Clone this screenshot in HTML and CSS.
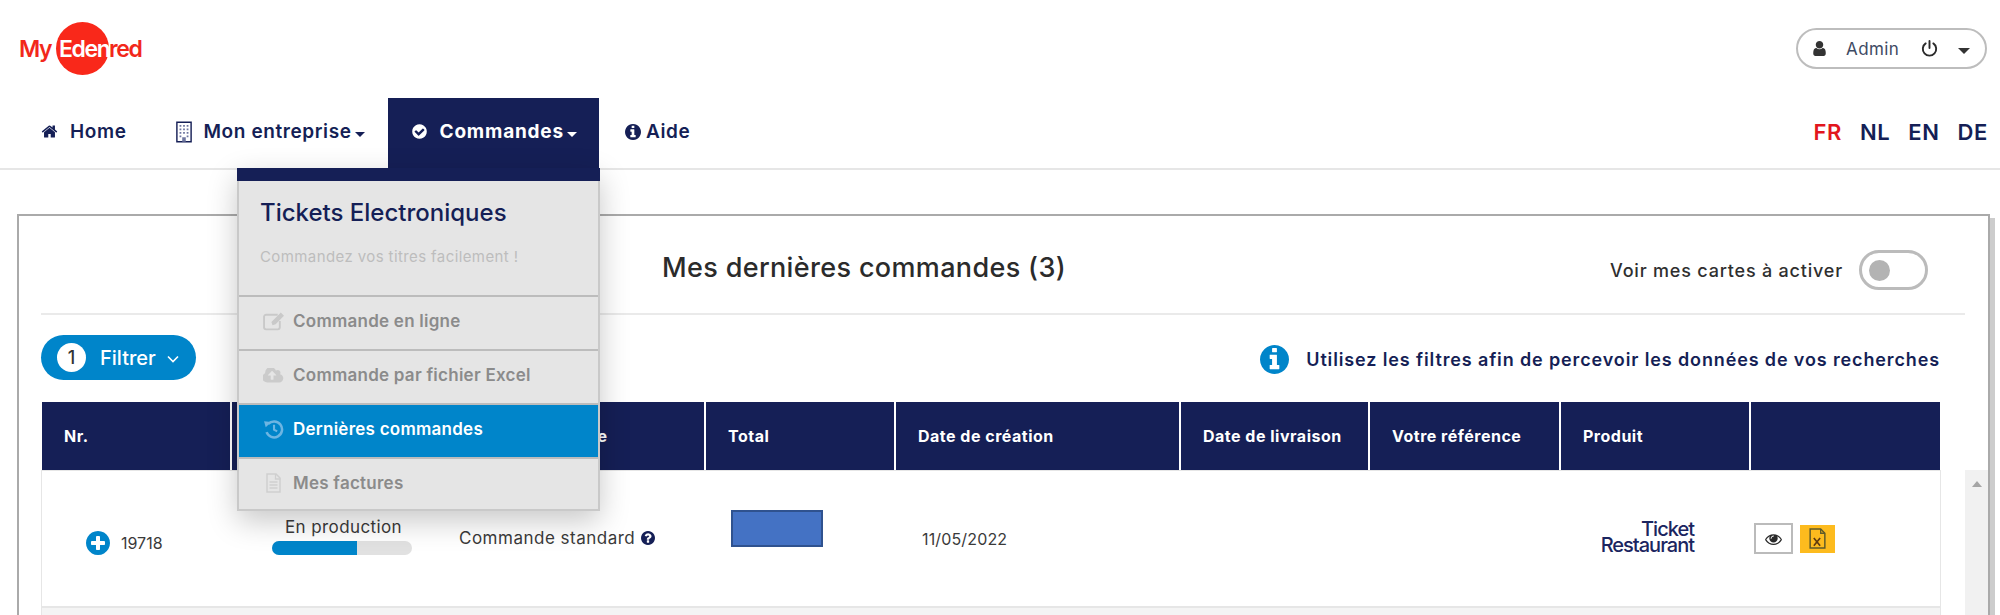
FILE: index.html
```html
<!DOCTYPE html>
<html lang="fr">
<head>
<meta charset="utf-8">
<title>MyEdenred</title>
<link rel="stylesheet" href="styles.css">
</head>
<body>
<svg class="defs" aria-hidden="true">
  <symbol id="i-home" viewBox="0 0 1792 1792"><path d="M1472 992v480q0 26-19 45t-45 19h-384v-384h-256v384h-384q-26 0-45-19t-19-45v-480q0-1 .5-3t.5-3l575-474 575 474q1 2 1 6zm223-69l-62 74q-8 9-21 11h-3q-13 0-21-7l-692-577-692 577q-12 8-24 7-13-2-21-11l-62-74q-8-10-7-23.5t11-21.5l719-599q32-26 76-26t76 26l244 204v-195q0-14 9-23t23-9h192q14 0 23 9t9 23v408l219 182q10 8 11 21.5t-7 23.5z"/></symbol>
  <symbol id="i-check" viewBox="0 0 1792 1792"><path d="M1412 734q0-28-18-46l-91-90q-19-19-45-19t-45 19l-408 407-226-226q-19-19-45-19t-45 19l-91 90q-18 18-18 46 0 27 18 45l362 362q19 19 45 19 27 0 46-19l543-543q18-18 18-45zm252 162q0 209-103 385.5t-279.5 279.5-385.5 103-385.5-103-279.5-279.5-103-385.5 103-385.5 279.5-279.5 385.5-103 385.5 103 279.5 279.5 103 385.5z"/></symbol>
  <symbol id="i-info" viewBox="128 128 1536 1536"><path d="M1152 1376v-160q0-14-9-23t-23-9h-96v-512q0-14-9-23t-23-9h-320q-14 0-23 9t-9 23v160q0 14 9 23t23 9h96v320h-96q-14 0-23 9t-9 23v160q0 14 9 23t23 9h448q14 0 23-9t9-23zm-128-896v-160q0-14-9-23t-23-9h-192q-14 0-23 9t-9 23v160q0 14 9 23t23 9h192q14 0 23-9t9-23zm640 416q0 209-103 385.5t-279.5 279.5-385.5 103-385.5-103-279.5-279.5-103-385.5 103-385.5 279.5-279.5 385.5-103 385.5 103 279.5 279.5 103 385.5z"/></symbol>
  <symbol id="i-plus" viewBox="128 128 1536 1536"><path d="M1344 960v-128q0-26-19-45t-45-19h-256v-256q0-26-19-45t-45-19h-128q-26 0-45 19t-19 45v256h-256q-26 0-45 19t-19 45v128q0 26 19 45t45 19h256v256q0 26 19 45t45 19h128q26 0 45-19t19-45v-256h256q26 0 45-19t19-45zm320-64q0 209-103 385.5t-279.5 279.5-385.5 103-385.5-103-279.5-279.5-103-385.5 103-385.5 279.5-279.5 385.5-103 385.5 103 279.5 279.5 103 385.5z"/></symbol>
  <symbol id="i-question" viewBox="128 128 1536 1536"><path d="M1024 1376v-192q0-14-9-23t-23-9h-192q-14 0-23 9t-9 23v192q0 14 9 23t23 9h192q14 0 23-9t9-23zm256-672q0-88-55.5-163t-138.5-116-170-41q-243 0-371 213-15 24 8 42l132 100q7 6 19 6 16 0 25-12 53-68 86-92 34-24 86-24 48 0 85.5 26t37.5 59q0 38-20 61t-68 45q-63 28-115.5 86.5t-52.5 125.5v36q0 14 9 23t23 9h192q14 0 23-9t9-23q0-19 21.5-49.5t54.5-49.5q32-18 49-28.5t46-35 44.5-48 28-60.5 12.5-81zm384 192q0 209-103 385.5t-279.5 279.5-385.5 103-385.5-103-279.5-279.5-103-385.5 103-385.5 279.5-279.5 385.5-103 385.5 103 279.5 279.5 103 385.5z"/></symbol>
  <symbol id="i-user" viewBox="256 128 1280 1536"><path d="M1536 1399q0 109-62.5 187t-150.5 78h-854q-88 0-150.5-78t-62.5-187q0-85 8.5-160.5t31.5-152 58.5-131 94-89 134.5-34.5q131 128 313 128t313-128q76 0 134.5 34.5t94 89 58.5 131 31.5 152 8.5 160.5zm-256-887q0 159-112.5 271.5t-271.5 112.5-271.5-112.5-112.5-271.5 112.5-271.5 271.5-112.5 271.5 112.5 112.5 271.5z"/></symbol>
  <symbol id="i-eye" viewBox="0 256 1792 1280"><path d="M1664 960q-152-236-381-353 61 104 61 225 0 185-131.5 316.5t-316.5 131.5-316.5-131.5-131.5-316.5q0-121 61-225-229 117-381 353 133 205 333.5 326.5t434.5 121.5 434.5-121.5 333.5-326.5zm-720-384q0-20-14-34t-34-14q-125 0-214.5 89.5t-89.5 214.5q0 20 14 34t34 14 34-14 14-34q0-86 61-147t147-61q20 0 34-14t14-34zm848 384q0 34-20 69-140 230-376.5 368.5t-499.5 138.5-499.5-139-376.5-368q-20-35-20-69t20-69q140-229 376.5-368t499.5-139 499.5 139 376.5 368q20 35 20 69z"/></symbol>
  <symbol id="i-cloud" viewBox="0 256 1920 1280"><path d="M1216 864q0-14-9-23l-352-352q-9-9-23-9t-23 9l-351 351q-10 12-10 24 0 14 9 23t23 9h224v352q0 13 9.5 22.5t22.5 9.5h192q13 0 22.5-9.5t9.5-22.5v-352h224q13 0 22.5-9.5t9.5-22.5zm640 288q0 159-112.5 271.5t-271.5 112.5h-1088q-185 0-316.5-131.5t-131.5-316.5q0-130 70-240t188-165q-2-30-2-43 0-212 150-362t362-150q156 0 285.5 87t188.5 231q71-62 166-62 106 0 181 75t75 181q0 76-41 138 130 31 213.5 135.5t83.5 238.5z"/></symbol>
</svg>

<header class="top">
  <div class="logo">
    <span class="logo-disc"></span>
    <span class="logo-my">My</span><span class="logo-name">Eden</span><span class="logo-end">red</span>
  </div>
  <div class="user-pill">
    <svg class="pill-user"><use href="#i-user"/></svg>
    <span class="pill-name">Admin</span>
    <svg class="pill-power" viewBox="0 0 16 16"><path d="M8 1v6.5M4.4 3.2a6.3 6.3 0 1 0 7.2 0" fill="none" stroke="#2b2b2b" stroke-width="1.8" stroke-linecap="round"/></svg>
    <span class="caret pill-caret"></span>
  </div>
</header>

<nav class="nav">
  <a class="nav-item nav-item-home"><svg class="nav-ico"><use href="#i-home"/></svg><span>Home</span></a>
  <a class="nav-item nav-item-org">
    <svg class="nav-ico" viewBox="0 0 18 24"><path d="M1 1h16v22H1z" fill="#fff" stroke="#151f56" stroke-width="1.6"/><path d="M4 4h2v2H4zm4 0h2v2H8zm4 0h2v2h-2zM4 8h2v2H4zm4 0h2v2H8zm4 0h2v2h-2zM4 12h2v2H4zm4 0h2v2H8zm4 0h2v2h-2zM4 16h2v2H4zm8 0h2v2h-2zM7 18h4v5H7z" fill="#6f77a0"/></svg>
    <span>Mon entreprise</span><span class="caret nav-caret"></span>
  </a>
  <a class="nav-item nav-item-active"><svg class="nav-ico"><use href="#i-check"/></svg><span>Commandes</span><span class="caret nav-caret"></span></a>
  <a class="nav-item nav-item-help"><svg class="help-ico"><use href="#i-info"/></svg><span>Aide</span></a>
  <div class="langs">
    <a class="lang lang-on">FR</a><a class="lang">NL</a><a class="lang">EN</a><a class="lang">DE</a>
  </div>

  <div class="menu">
    <div class="menu-band"></div>
    <div class="menu-head">
      <div class="menu-title">Tickets Electroniques</div>
      <div class="menu-sub">Commandez vos titres facilement !</div>
    </div>
    <a class="menu-item">
      <svg class="menu-ico" viewBox="0 0 20 18"><path d="M14 3H3a2 2 0 0 0-2 2v10a2 2 0 0 0 2 2h11a2 2 0 0 0 2-2V9" fill="none" stroke="#c9c9c9" stroke-width="1.8"/><path d="M8 10l1 3 3-1 8-8-3-3z" fill="#c9c9c9"/></svg>
      <span>Commande en ligne</span>
    </a>
    <a class="menu-item"><svg class="menu-ico menu-ico-fill"><use href="#i-cloud"/></svg><span>Commande par fichier Excel</span></a>
    <a class="menu-item menu-item-on">
      <svg class="menu-ico" viewBox="0 0 20 18"><path d="M5 4.2A7.6 7.6 0 1 1 3.4 12" fill="none" stroke="#6db5e2" stroke-width="2.4"/><path d="M1 1.5l7 .8-5.4 5z" fill="#6db5e2"/><path d="M10.5 5v4.6l3 1.6" fill="none" stroke="#6db5e2" stroke-width="2"/></svg>
      <span>Dernières commandes</span>
    </a>
    <a class="menu-item">
      <svg class="menu-ico" viewBox="0 0 20 20"><path d="M3.5 1h9l4 4v14h-13z" fill="none" stroke="#cfcfcf" stroke-width="1.5"/><path d="M12 1v5h5M6 9h8M6 12h8M6 15h8" fill="none" stroke="#cfcfcf" stroke-width="1.3"/></svg>
      <span>Mes factures</span>
    </a>
  </div>
</nav>

<main class="page">
  <section class="panel">
    <div class="title-row">
      <h1 class="title">Mes dernières commandes (3)</h1>
      <div class="toggle-wrap">
        <span class="toggle-label">Voir mes cartes à activer</span>
        <span class="toggle"><span class="toggle-knob"></span></span>
      </div>
    </div>
    <div class="toolbar">
      <button class="filter"><span class="filter-count">1</span><span>Filtrer</span>
        <svg class="filter-chev" viewBox="0 0 12 8"><path d="M1 1.5l5 5 5-5" fill="none" stroke="#fff" stroke-width="1.6"/></svg>
      </button>
      <div class="note"><svg class="note-ico"><use href="#i-info"/></svg><span>Utilisez les filtres afin de percevoir les données de vos recherches</span></div>
    </div>
    <div class="thead cols">
      <div class="th">Nr.</div>
      <div class="th"></div>
      <div class="th th-type">Type de commande</div>
      <div class="th">Total</div>
      <div class="th">Date de création</div>
      <div class="th">Date de livraison</div>
      <div class="th">Votre référence</div>
      <div class="th">Produit</div>
      <div class="th"></div>
    </div>
    <div class="tbody">
      <div class="rows">
        <div class="row cols">
          <div class="td td-nr"><svg class="plus"><use href="#i-plus"/></svg><span>19718</span></div>
          <div class="td td-status">
            <div class="status-text">En production</div>
            <div class="bar"><div class="bar-fill" style="width:61%"></div></div>
          </div>
          <div class="td td-type"><span>Commande standard</span><svg class="q"><use href="#i-question"/></svg></div>
          <div class="td td-total"><div class="redact"></div></div>
          <div class="td td-date">11/05/2022</div>
          <div class="td"></div>
          <div class="td"></div>
          <div class="td td-prod"><div class="tr-logo">Ticket<br>Restaurant</div></div>
          <div class="td td-act">
            <span class="btn-eye"><svg class="eye"><use href="#i-eye"/></svg></span>
            <span class="btn-xl"><svg class="xl" viewBox="0 0 16 20"><path d="M1 1h10l4 4v14H1z" fill="none" stroke="#5f5a2a" stroke-width="1.4"/><path d="M11 1v4h4" fill="none" stroke="#5f5a2a" stroke-width="1.2"/><path d="M4.5 9.5l6 7.5M10.5 9.5l-6 7.5" stroke="#5f3a10" stroke-width="1.6"/></svg></span>
          </div>
        </div>
        <div class="row-next"></div>
      </div>
      <div class="scroll"><span class="scroll-up"></span></div>
    </div>
  </section>
</main>
</body>
</html>
```
FILE: styles.css
```css
* { box-sizing: border-box; }
html, body { margin: 0; height: 615px; overflow: hidden; background: #fff; }
body { font-family: Inter, "Liberation Sans", sans-serif; color: #333; font-size: 16px; }
.defs { display: none; }
svg { display: block; flex: none; fill: currentColor; }
a { color: inherit; text-decoration: none; }
.caret { display: inline-block; width: 0; height: 0; border-style: solid; border-color: transparent; }

.top { height: 98px; display: flex; justify-content: space-between; align-items: flex-start; padding: 22px 13px 0 19px; }
.logo { position: relative; width: 125px; height: 53px; display: flex; align-items: center; font-size: 23px; font-weight: 600; letter-spacing: -1.4px; color: #f2281b; }
.logo-disc { position: absolute; left: 37px; top: 0; width: 53px; height: 53px; border-radius: 50%; background: #f9281a; }
.logo-my { position: relative; width: 40px; }
.logo-name { position: relative; width: 50px; color: #fff; }
.logo-end { position: relative; }

.user-pill { margin-top: 6px; width: 191px; height: 41px; border: 2px solid #bdbdbd; border-radius: 21px; display: flex; align-items: center; padding-left: 15px; }
.pill-user { width: 13px; height: 15px; color: #333; }
.pill-name { margin-left: 20px; width: 75px; font-size: 17px; letter-spacing: .4px; color: #3e4a63; }
.pill-power { width: 17px; height: 17px; }
.pill-caret { margin-left: 20px; border-width: 6px 6px 0; border-top-color: #333; margin-top: 4px; }

.nav { position: relative; height: 72px; border-bottom: 2px solid #e6e6e6; display: flex; padding-left: 18px; color: #151f56; font-size: 19px; font-weight: 600; letter-spacing: .6px; }
.nav-item { display: flex; align-items: center; padding: 0 23px 3px; height: 70px; }
.nav-item-home { padding-right: 27px; }
.nav-ico { width: 17px; height: 17px; margin-right: 12px; }
.nav-item-org .nav-ico { height: 24px; width: 16px; margin-right: 11px; }
.nav-caret { border-width: 5px 5px 0; border-top-color: currentColor; margin: 6px 0 0 3px; }
.nav-item-active { background: #151f56; color: #fff; padding-right: 22px; font-weight: 700; letter-spacing: .8px; }
.nav-item-help { padding: 0 0 3px 26px; }
.help-ico { width: 16px; height: 18px; margin-right: 5px; }
.langs { margin-left: auto; margin-right: 12px; display: flex; align-items: center; gap: 18px; height: 70px; font-size: 22px; letter-spacing: .6px; padding-bottom: 3px; }
.lang-on { color: #e2161d; }

.menu { position: absolute; z-index: 10; left: 237px; top: 70px; width: 363px; height: 343px; background: #e5e5e5; border: 2px solid #c9c9c9; border-top: 0; box-shadow: 0 10px 28px rgba(0, 0, 0, .22); font-weight: 500; letter-spacing: 0; }
.menu-band { height: 13px; margin: 0 -2px; background: #151f56; }
.menu-head { height: 114px; padding: 16px 0 0 21px; }
.menu-title { font-size: 24px; line-height: 32px; color: #151f56; font-weight: 500; }
.menu-sub { margin-top: 18px; font-size: 15px; line-height: 20px; letter-spacing: .4px; color: #bdbdbd; font-weight: 400; }
.menu-item { display: flex; align-items: center; height: 54px; border-top: 2px solid #bcbcbc; padding: 0 0 4px 24px; font-size: 17px; letter-spacing: .25px; font-weight: 600; color: #8b8b8b; }
.menu-item:last-child { height: 53px; }
.menu-ico { width: 21px; height: 20px; margin-right: 9px; }
.menu-ico-fill { color: #cbcbcb; height: 15px; }
.menu-item-on { background: #0085ca; color: #fff; }

.page { padding-left: 17px; padding-top: 44px; }
.panel { width: 1973px; height: 480px; border: 2px solid #aaa; border-bottom: 0; box-shadow: 5px 4px 0 #ccc; padding-left: 22px; }
.title-row { width: 1924px; height: 99px; border-bottom: 2px solid #eaeaea; padding: 5px 37px 0 621px; display: flex; justify-content: space-between; align-items: center; }
.title { margin: 0; font-size: 27px; letter-spacing: .35px; font-weight: 500; color: #2b2b2b; }
.toggle-wrap { display: flex; align-items: center; gap: 16px; margin-top: 6px; font-size: 18px; letter-spacing: .8px; font-weight: 500; color: #2f2f2f; }
.toggle { width: 69px; height: 40px; border: 3px solid #bbb; border-radius: 20px; display: flex; align-items: center; padding-left: 7px; }
.toggle-knob { width: 21px; height: 21px; border-radius: 50%; background: #b3b3b3; }

.toolbar { width: 1899px; height: 87px; padding-top: 20px; display: flex; justify-content: space-between; align-items: flex-start; }
.filter { width: 155px; height: 45px; border: 0; border-radius: 23px; background: #0085ca; color: #fff; display: flex; align-items: center; padding: 0 0 0 16px; font: 500 20px Inter, sans-serif; }
.filter-count { width: 29px; height: 29px; border-radius: 50%; background: #fff; color: #333; font-size: 18px; line-height: 29px; text-align: center; margin-right: 14px; }
.filter-chev { width: 12px; height: 8px; margin: 2px 0 0 11px; }
.note { display: flex; align-items: center; gap: 17px; margin-top: 10px; font-size: 18px; letter-spacing: .87px; font-weight: 600; color: #151f56; }
.note-ico { width: 29px; height: 29px; color: #0085ca; }

.cols { display: grid; grid-template-columns: 188px 204px 266px 188px 283px 187px 189px 188px 189px; column-gap: 2px; }
.thead { margin-left: 1px; width: 1898px; }
.th { height: 68px; background: #151f56; color: #fff; font-size: 16px; letter-spacing: .5px; font-weight: 700; padding-left: 22px; display: flex; align-items: center; }
.th-type { padding-left: 8px; }

.tbody { display: flex; justify-content: space-between; height: 145px; }
.rows { width: 1900px; }
.row { height: 138px; border: 1px solid #e6e6e6; border-bottom-width: 2px; background: #fff; }
.row-next { height: 20px; background: #f4f4f4; border: 1px solid #e6e6e6; border-top: 0; }
.td { display: flex; align-items: center; padding-left: 22px; font-size: 16px; color: #3a3a3a; }
.td-nr { padding: 8px 0 0 44px; }
.plus { width: 24px; height: 24px; margin-right: 11px; color: #0085ca; }
.td-status { display: block; padding: 45px 0 0 40px; }
.status-text { font-size: 17px; letter-spacing: .4px; line-height: 22px; padding-left: 13px; }
.bar { width: 140px; height: 14px; margin-top: 3px; border-radius: 7px; background: #e1e1e1; overflow: hidden; }
.bar-fill { height: 100%; background: #0085ca; }
.td-type { padding: 0 0 0 21px; margin-top: -2px; font-size: 17px; letter-spacing: .5px; }
.q { width: 14px; height: 14px; margin-left: 6px; color: #151f56; }
.td-total { padding: 39px 0 0 25px; align-items: flex-start; }
.redact { width: 92px; height: 37px; background: #4472c4; border: 2px solid #2f528f; }
.td-date { padding-left: 26px; letter-spacing: .15px; }
.td-prod { justify-content: flex-start; padding: 0 0 4px 39px; }
.tr-logo { width: 94px; text-align: right; font-size: 20px; line-height: 16px; letter-spacing: -1px; font-weight: 500; color: #1b2560; }
.td-act { padding: 0 0 0 3px; gap: 7px; }
.btn-eye { width: 39px; height: 31px; border: 2px solid #bbb; display: flex; align-items: center; justify-content: center; background: #fff; }
.eye { width: 17px; height: 12px; color: #2a2a2a; }
.btn-xl { width: 35px; height: 28px; background: #fdbb1e; display: flex; align-items: center; justify-content: center; }
.xl { width: 17px; height: 21px; }
.scroll { width: 23px; height: 145px; background: #f1f1f1; display: flex; justify-content: center; padding-top: 11px; }
.scroll-up { width: 0; height: 0; border-style: solid; border-width: 0 5.5px 6px; border-color: transparent transparent #a5a5a5; }
```
